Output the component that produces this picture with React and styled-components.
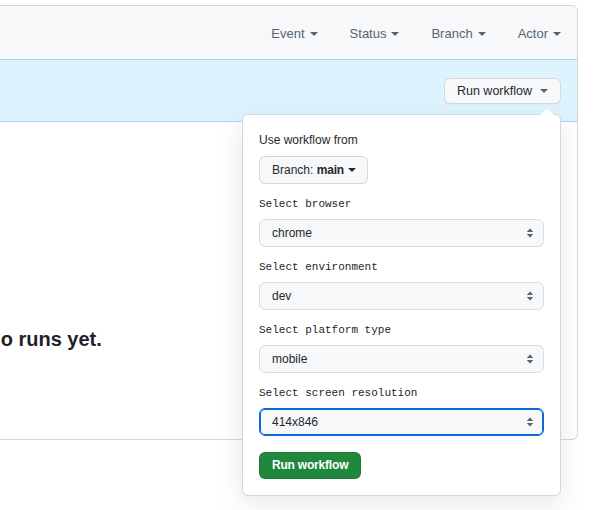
import React from "react";
import styled, { createGlobalStyle } from "styled-components";

const GlobalStyle = createGlobalStyle`
  html, body {
    margin: 0;
    padding: 0;
    background: #ffffff;
    font-family: "Liberation Sans", Arial, sans-serif;
    color: #1f2328;
  }
  * { box-sizing: border-box; }
`;

const Page = styled.div`
  padding-top: 5px;
  width: 602px;
  height: 510px;
  overflow: hidden;
`;

const Box = styled.section`
  margin-left: -490px;
  width: 1068px;
  border: 1px solid #d0d7de;
  border-radius: 6px;
`;

const FilterBar = styled.div`
  height: 53px;
  padding-top: 2px;
  background: #f6f8fa;
  border-radius: 6px 6px 0 0;
  display: flex;
  justify-content: flex-end;
  align-items: center;
`;

const Filter = styled.button`
  display: flex;
  align-items: center;
  gap: 5px;
  padding: 0 16px;
  border: 0;
  background: transparent;
  font-family: inherit;
  font-size: 13px;
  color: #59636e;
  cursor: pointer;
`;

const Banner = styled.div`
  height: 63px;
  background: #ddf4ff;
  border-top: 1px solid rgba(84, 174, 255, 0.4);
  border-bottom: 1px solid rgba(84, 174, 255, 0.4);
  display: flex;
  justify-content: flex-end;
  align-items: center;
  padding-right: 16px;
`;

const MenuAnchor = styled.div`
  position: relative;
`;

const GhostButton = styled.button`
  display: flex;
  align-items: center;
  gap: 8px;
  height: 26px;
  padding: 0 12px;
  background: #f6f8fa;
  border: 1px solid rgba(31, 35, 40, 0.15);
  border-radius: 6px;
  font-family: inherit;
  font-size: 12.5px;
  color: #24292f;
  box-shadow: 0 1px 0 rgba(31, 35, 40, 0.04);
`;

const Menu = styled.div`
  position: absolute;
  top: 36px;
  right: 0;
  width: 319px;
  padding: 16px;
  background: #ffffff;
  border: 1px solid #d0d7de;
  border-radius: 6px;
  box-shadow: 0 8px 24px rgba(140, 149, 159, 0.22);
  z-index: 2;

  &::before,
  &::after {
    content: "";
    position: absolute;
    right: 6px;
    border: 7px solid transparent;
    border-top-width: 0;
  }
  &::before {
    top: -8px;
    border-bottom: 8px solid rgba(208, 215, 222, 0.6);
  }
  &::after {
    top: -7px;
    border-bottom: 7px solid #ffffff;
  }
`;

const MenuTitle = styled.div`
  font-size: 12px;
  line-height: 18px;
  color: #24292f;
`;

const BranchButton = styled.button`
  margin-top: 7px;
  display: inline-flex;
  align-items: center;
  gap: 4px;
  height: 28px;
  padding: 0 11px 0 12px;
  background: #f6f8fa;
  border: 1px solid rgba(31, 35, 40, 0.15);
  border-radius: 6px;
  font-family: inherit;
  font-size: 12px;
  color: #24292f;

  b {
    font-weight: 700;
    letter-spacing: -0.2px;
  }
`;

const Field = styled.div`
  margin-top: 11px;
  display: flex;
  flex-direction: column;
  gap: 6px;
`;

const FieldLabel = styled.label`
  font-family: "Liberation Mono", "DejaVu Sans Mono", monospace;
  font-size: 11px;
  line-height: 18px;
  color: #1f2328;
`;

const SelectWrap = styled.div`
  position: relative;
`;

const Select = styled.select`
  appearance: none;
  -webkit-appearance: none;
  display: block;
  width: 100%;
  height: 28px;
  padding: 0 28px 0 12px;
  background: #f6f8fa;
  border: 1px solid ${(p) => (p.$focused ? "#0969da" : "#d8dee4")};
  box-shadow: ${(p) => (p.$focused ? "inset 0 0 0 1px #0969da" : "none")};
  border-radius: 6px;
  font-family: "Liberation Sans", Arial, sans-serif;
  font-size: 12px;
  color: #24292f;
  outline: none;
`;

const SelectArrow = styled.svg`
  position: absolute;
  right: 8px;
  top: 8px;
  pointer-events: none;
`;

const RunButton = styled.button`
  margin-top: 16px;
  height: 27px;
  padding: 0 12px;
  background: #1f883d;
  color: #ffffff;
  border: 1px solid rgba(31, 35, 40, 0.15);
  border-radius: 6px;
  font-family: inherit;
  font-size: 12px;
  font-weight: 700;
  letter-spacing: -0.2px;
`;

const EmptyState = styled.div`
  height: 317px;
  padding-top: 202px;
  text-align: center;
`;

const EmptyTitle = styled.h3`
  margin: 0;
  font-size: 20px;
  line-height: 30px;
  font-weight: 700;
  color: #1f2328;
`;

function Caret({ color = "#59636e" }) {
  return (
    <svg width="8" height="4" viewBox="0 0 8 4" aria-hidden="true">
      <path d="M0 0h8L4 4z" fill={color} />
    </svg>
  );
}

function UpDown() {
  return (
    <SelectArrow width="12" height="12" viewBox="0 0 12 12" aria-hidden="true">
      <path d="M6 1.5 9.2 5H2.8z M6 10.5 2.8 7h6.4z" fill="#59636e" />
    </SelectArrow>
  );
}

const filters = ["Event", "Status", "Branch", "Actor"];

const inputs = [
  { label: "Select browser", value: "chrome" },
  { label: "Select environment", value: "dev" },
  { label: "Select platform type", value: "mobile" },
  { label: "Select screen resolution", value: "414x846", focused: true },
];

export default function App() {
  return (
    <>
      <GlobalStyle />
      <Page>
        <Box>
          <FilterBar>
            {filters.map((f) => (
              <Filter key={f}>
                {f}
                <Caret />
              </Filter>
            ))}
          </FilterBar>
          <Banner>
            <MenuAnchor>
              <GhostButton>
                Run workflow
                <Caret />
              </GhostButton>
              <Menu>
                <MenuTitle>Use workflow from</MenuTitle>
                <BranchButton>
                  <span>
                    Branch: <b>main</b>
                  </span>
                  <Caret color="#24292f" />
                </BranchButton>
                {inputs.map((i) => (
                  <Field key={i.label}>
                    <FieldLabel>{i.label}</FieldLabel>
                    <SelectWrap>
                      <Select defaultValue={i.value} $focused={i.focused}>
                        <option value={i.value}>{i.value}</option>
                      </Select>
                      <UpDown />
                    </SelectWrap>
                  </Field>
                ))}
                <RunButton>Run workflow</RunButton>
              </Menu>
            </MenuAnchor>
          </Banner>
          <EmptyState>
            <EmptyTitle>No runs yet.</EmptyTitle>
          </EmptyState>
        </Box>
      </Page>
    </>
  );
}
